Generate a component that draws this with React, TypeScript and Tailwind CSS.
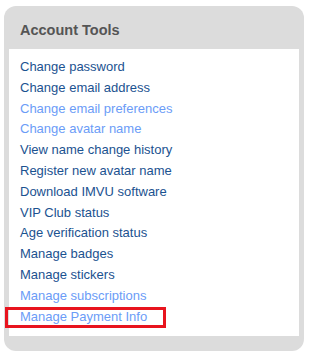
import React from 'react';

const LINKS: { label: string; light?: boolean }[] = [
  { label: 'Change password' },
  { label: 'Change email address' },
  { label: 'Change email preferences', light: true },
  { label: 'Change avatar name', light: true },
  { label: 'View name change history' },
  { label: 'Register new avatar name' },
  { label: 'Download IMVU software' },
  { label: 'VIP Club status' },
  { label: 'Age verification status' },
  { label: 'Manage badges' },
  { label: 'Manage stickers' },
  { label: 'Manage subscriptions', light: true },
  { label: 'Manage Payment Info', light: true },
];

const App: React.FC = () => {
  return (
    <div className="min-h-[359px] bg-white pt-[6px] pl-[4px] font-['Liberation_Sans',Arial,sans-serif]">
      <div className="w-[300px] rounded-[12px] bg-[#dcdcdc] px-[5px] pb-[15px]">
        <div className="h-[43px] pl-[11px] pt-[16px] text-[14.5px] leading-[17px] font-bold text-[#555555]">
          Account Tools
        </div>
        <ul className="relative bg-white pl-[11px] pt-[8px] pb-[9px]">
          {LINKS.map((link, i) => (
            <li key={link.label} className="relative text-[13px] leading-[20.8px]">
              <a
                href="#"
                className={link.light ? 'text-[#6b9cf7]' : 'text-[#1b5290]'}
              >
                {link.label}
              </a>
              {i === LINKS.length - 1 && (
                <span className="pointer-events-none absolute top-0 left-[-15px] h-[21px] w-[161px] border-[3px] border-[#e8141e]" />
              )}
            </li>
          ))}
        </ul>
      </div>
    </div>
  );
};

export default App;
